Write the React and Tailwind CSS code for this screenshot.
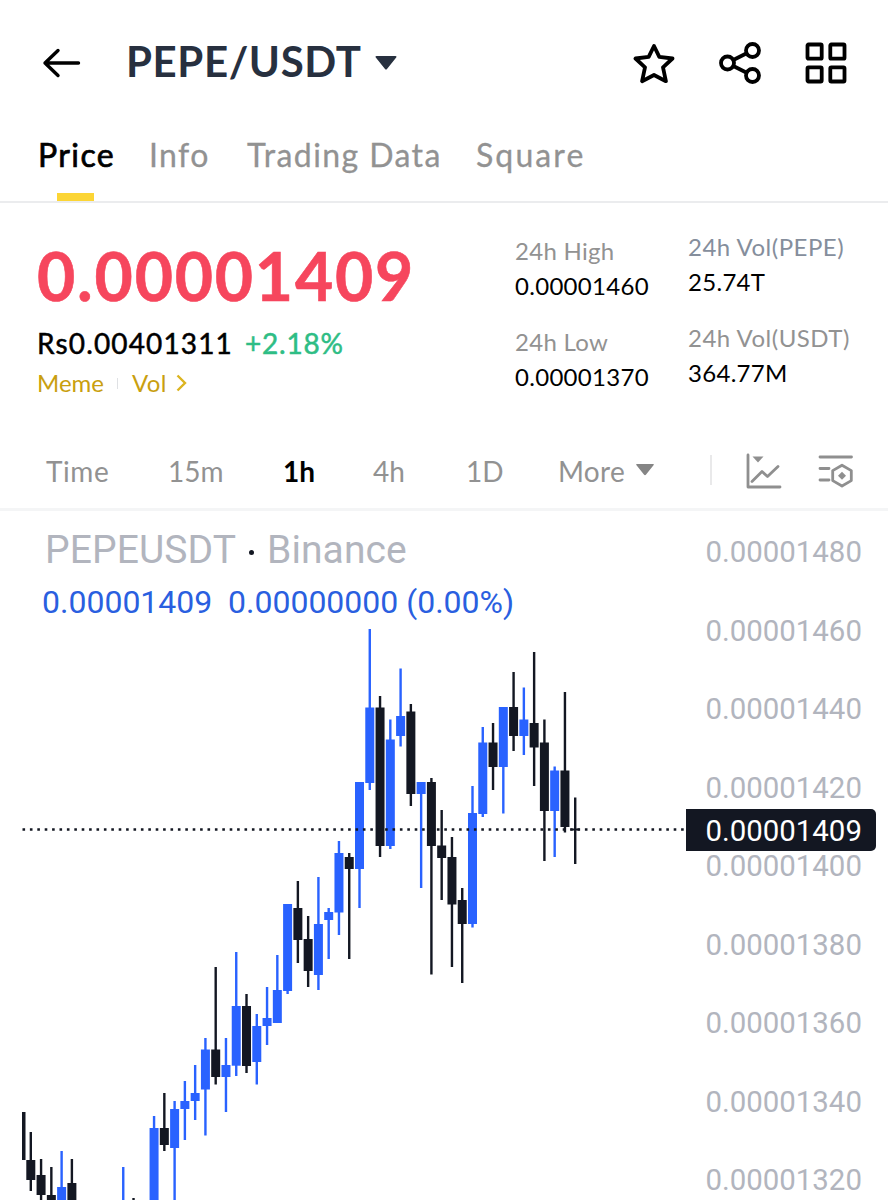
const UP = '#2962ff'
const DOWN = '#131722'

const FIRST_X = 30.8
const STEP = 10.272

// [slot, wick top, wick bottom, body top, body bottom, color]
const candles = [
  [0, 1132, 1191, 1160, 1180, DOWN],
  [1, 1159, 1210, 1175, 1195, DOWN],
  [2, 1167, 1210, 1195, 1210, DOWN],
  [3, 1151, 1210, 1187, 1210, UP],
  [4, 1159, 1210, 1183, 1210, DOWN],
  [9, 1167, 1210, 1208, 1210, UP],
  [10, 1198, 1210, 1208, 1210, DOWN],
  [12, 1116, 1210, 1128, 1210, UP],
  [13, 1093, 1151, 1128, 1145, DOWN],
  [14, 1101, 1210, 1109, 1148, UP],
  [15, 1081, 1140, 1101, 1109, UP],
  [16, 1065, 1120, 1093, 1101, UP],
  [17, 1038, 1135.5, 1049.5, 1089.5, UP],
  [18, 967, 1084.5, 1049.5, 1077, DOWN],
  [19, 1038, 1112, 1065, 1077, UP],
  [20, 952, 1076, 1006, 1065.7, UP],
  [21, 994, 1073, 1006, 1066, DOWN],
  [22, 1014, 1084.5, 1026, 1062, UP],
  [23, 987, 1045, 1018, 1026, UP],
  [24, 955, 1023, 990, 1023, UP],
  [25, 904, 994, 904, 991, UP],
  [26, 881, 963, 908, 940, DOWN],
  [27, 916, 987, 939, 971, DOWN],
  [28, 877, 990, 924, 975, UP],
  [29, 908, 959, 912, 920, UP],
  [30, 841, 935, 853, 912.5, UP],
  [31, 853, 959, 857, 869, DOWN],
  [32, 782, 908, 782, 869, UP],
  [33, 629, 790, 707.5, 783, UP],
  [34, 696, 857, 707.5, 846, DOWN],
  [35, 719.5, 849, 739.5, 846, UP],
  [36, 668.5, 746.5, 716, 736, UP],
  [37, 704, 806, 711.5, 794, DOWN],
  [38, 782, 888, 782, 794, UP],
  [39, 778, 974.5, 782, 846, DOWN],
  [40, 810, 900, 845.5, 858, DOWN],
  [41, 837, 967, 857, 904.5, DOWN],
  [42, 888, 983, 900, 924, DOWN],
  [43, 786, 927.5, 813, 924, UP],
  [44, 727, 817, 742.5, 814, UP],
  [45, 723, 790, 742.5, 767, DOWN],
  [46, 707, 813.5, 707, 767, UP],
  [47, 672, 751, 707, 736, DOWN],
  [48, 687.5, 755, 719.5, 736, UP],
  [49, 652, 786, 723, 747.5, DOWN],
  [50, 719.5, 861, 742.5, 811, DOWN],
  [51, 766.5, 857, 770.5, 811, UP],
  [52, 692, 832.5, 770.5, 827, DOWN],
  [53, 797.5, 864, 828.5, 830.5, DOWN],
]

const axisPrices = [
  '0.00001480',
  '0.00001460',
  '0.00001440',
  '0.00001420',
  '0.00001400',
  '0.00001380',
  '0.00001360',
  '0.00001340',
  '0.00001320',
]

function Header() {
  return (
    <header className="flex h-[124px] items-center pt-px pr-[41px] pl-[42px]">
      <svg width="39" height="32" viewBox="0 0 39 32" fill="none" stroke="#000" strokeWidth="3.4" strokeLinecap="round" strokeLinejoin="round">
        <path d="M36.5 16H3M16 3.5L3 16l13 12.5" />
      </svg>
      <h1 className="ml-[45px] w-[235px] pb-[4px] text-[42px] leading-none font-bold tracking-[0.600px] whitespace-nowrap text-[#27303f]">PEPE/USDT</h1>
      <svg className="ml-[14px]" width="22" height="14" viewBox="0 0 22 14" fill="#27303f">
        <path d="M1.5 0h19c1 0 1.300.8.700 1.500L12 13c-.6.700-1.400.700-2 0L.8 1.500C.2.800.500 0 1.500 0z" />
      </svg>
      <div className="ml-auto flex items-center gap-[44px]">
        <svg width="42" height="42" viewBox="0 0 42 42" fill="none" stroke="#000" strokeWidth="3.8" strokeLinejoin="round">
          <path d="M21 4L26.300 14.800 39.500 16.500 30 25.300 32.900 39.200 21 33 9.100 39.200 12 25.300 2.500 16.500 15.700 14.800z" />
        </svg>
        <svg width="42" height="42" viewBox="0 0 42 42" fill="none" stroke="#000" strokeWidth="3.8">
          <circle cx="8.500" cy="21" r="6.500" />
          <circle cx="33.500" cy="8.500" r="6.500" />
          <circle cx="33.500" cy="33.500" r="6.500" />
          <path d="M14.300 18L27.700 11.300M14.300 24l13.400 6.700" />
        </svg>
        <svg width="42" height="42" viewBox="0 0 42 42" fill="none" stroke="#000" strokeWidth="3.8">
          <rect x="2.500" y="2.500" width="14.200" height="14.200" rx="1" />
          <rect x="25.300" y="2.500" width="14.200" height="14.200" rx="1" />
          <rect x="2.500" y="25.300" width="14.200" height="14.200" rx="1" />
          <rect x="25.300" y="25.300" width="14.200" height="14.200" rx="1" />
        </svg>
      </div>
    </header>
  )
}

function Tabs() {
  return (
    <nav className="flex h-[79px] border-b-2 border-[#ebecee] pl-[38px] text-[32px] leading-[62px] tracking-[1.400px] whitespace-nowrap text-[#929292] [-webkit-text-stroke:0.3px]">
      <div className="flex w-[111px] flex-col">
        <span className="h-[69px] text-black [-webkit-text-stroke:0.7px]">Price</span>
        <span className="ml-[19px] h-2 w-[37px] bg-[#fcd535]" />
      </div>
      <span className="w-[98px]">Info</span>
      <span className="w-[229px]">Trading Data</span>
      <span className="tracking-[2.100px]">Square</span>
    </nav>
  )
}

function Stat({ label, value, labelClass = 'text-[#929292]' }) {
  return (
    <div className="h-[90.500px] text-[24px] leading-[35px] tracking-[0.300px] whitespace-nowrap">
      <p className={labelClass}>{label}</p>
      <p className="text-black">{value}</p>
    </div>
  )
}

function Summary() {
  return (
    <section className="flex h-[231px] pl-[37px]">
      <div className="w-[478px] pt-[35px] whitespace-nowrap">
        <p className="h-[77px] text-[66px] leading-[76px] font-bold tracking-[1.800px] text-[#f6465d] [-webkit-text-stroke:0.6px]">0.00001409</p>
        <p className="flex h-[56px] items-center text-[28px] [-webkit-text-stroke:0.5px]">
          <span className="w-[208px] tracking-[1.150px] text-black">Rs0.00401311</span>
          <span className="tracking-[0.800px] text-[#2ebd85]">+2.18%</span>
        </p>
        <p className="flex h-[24px] items-center text-[24px] text-[#c99f10]">
          <span className="w-[80px]">Meme</span>
          <span className="mr-[14px] h-[11px] w-px bg-[#dfe1e4]" />
          <span className="w-[44px] tracking-[0.400px]">Vol</span>
          <svg width="11" height="18" viewBox="0 0 11 18" fill="none" stroke="#dcb420" strokeWidth="2.400">
            <path d="M1.500 1.500L9 9l-7.500 7.500" />
          </svg>
        </p>
      </div>
      <div className="w-[173px] pt-[30px]">
        <Stat label="24h High" value="0.00001460" />
        <Stat label="24h Low" value="0.00001370" />
      </div>
      <div className="pt-[26px]">
        <Stat label="24h Vol(PEPE)" value="25.74T" labelClass="tracking-[0.500px] text-[#858e9c]" />
        <Stat label="24h Vol(USDT)" value="364.77M" labelClass="tracking-[0.500px] text-[#929292]" />
      </div>
    </section>
  )
}

function Intervals() {
  return (
    <div className="flex h-[77px] items-center border-b-3 border-[#f4f5f6] pl-[46px] text-[28px] whitespace-nowrap text-[#929292]">
      <span className="w-[122px] tracking-[0.600px]">Time</span>
      <span className="w-[115px]">15m</span>
      <span className="w-[90px] font-bold text-black">1h</span>
      <span className="w-[93px]">4h</span>
      <span className="w-[92px]">1D</span>
      <span className="w-[78px] tracking-[0.300px]">More</span>
      <svg className="mb-[2px]" width="18" height="12" viewBox="0 0 18 12" fill="#858585">
        <path d="M1 0h16c.8 0 1 .6.500 1.200L9.900 10.700c-.5.600-1.300.600-1.800 0L.5 1.200C0 .6.200 0 1 0z" />
      </svg>
      <span className="mb-[2px] ml-[56px] h-[30px] w-[2px] bg-[#e9e9ea]" />
      <svg className="ml-[34px]" width="36" height="36" viewBox="0 0 36 36" fill="none" stroke="#8f8f8f" strokeWidth="2.800" strokeLinecap="round" strokeLinejoin="round">
        <path d="M2 2v32h32" />
        <path d="M6 28.500L16 18.500l5.500 5L32 13.500" />
        <path d="M6.500 3.500h11l-5.500 6z" fill="#8f8f8f" stroke="none" />
      </svg>
      <svg className="mt-px ml-[36px]" width="36" height="34" viewBox="0 0 36 34" fill="none" stroke="#8f8f8f" strokeWidth="2.800" strokeLinecap="round">
        <path d="M2 2h31.500M2 13.500h9M2 25h9" />
        <path d="M24 10.200l9.300 5.400v10l-9.300 5.400-9.300-5.400v-10z" strokeLinejoin="round" />
        <path d="M24 16.800l4 4-4 4-4-4z" fill="#8f8f8f" stroke="none" />
      </svg>
    </div>
  )
}

function Chart() {
  return (
    <section className="relative flex h-[689px] overflow-hidden font-[Roboto,sans-serif]">
      <svg className="shrink-0" width="686" height="689" viewBox="0 511 686 689">
        <rect x="22" y="1112" width="3.500" height="48" fill={DOWN} />
        {candles.map(([slot, high, low, top, bottom, color]) => {
          const x = FIRST_X + slot * STEP
          return (
            <g key={slot} fill={color}>
              <rect x={x - 1.2} y={high} width="2.400" height={low - high} />
              <rect x={x - 4.5} y={top} width="9" height={bottom - top} />
            </g>
          )
        })}
        <path d="M22.500 829.500H686" stroke={DOWN} strokeWidth="2.600" strokeDasharray="2.600 4.800" />
      </svg>

      <div className="ml-[19.500px] pt-px text-[29.400px] text-[#b2b5be]">
        {axisPrices.map((price) => (
          <p key={price} className="h-[78.550px] leading-[81px]">{price}</p>
        ))}
      </div>

      <div className="absolute top-[298px] left-[686px] h-[42px] w-[190px] rounded-r-[5px] bg-[#131722] pl-[19.500px] text-[29.400px] leading-[45px] text-white">
        0.00001409
      </div>

      <div className="absolute top-[14px] left-[42px] whitespace-nowrap">
        <p className="ml-[3px] flex h-[50px] items-center text-[39px] text-[#b2b5be]">
          <span className="w-[204px] tracking-[0.100px]">PEPEUSDT</span>
          <span className="mt-1 mr-[13px] size-[5px] rounded-full bg-[#131722]" />
          <span className="tracking-[0.100px]">Binance</span>
        </p>
        <p className="flex h-[54px] items-center text-[32px] text-[#2a5fe0]">
          <span className="w-[186px]">0.00001409</span>
          <span>0.00000000 (0.00%)</span>
        </p>
      </div>
    </section>
  )
}

export default function App() {
  return (
    <main className="h-[1200px] w-[888px] overflow-hidden bg-white font-[Lato,sans-serif]">
      <Header />
      <Tabs />
      <Summary />
      <Intervals />
      <Chart />
    </main>
  )
}
